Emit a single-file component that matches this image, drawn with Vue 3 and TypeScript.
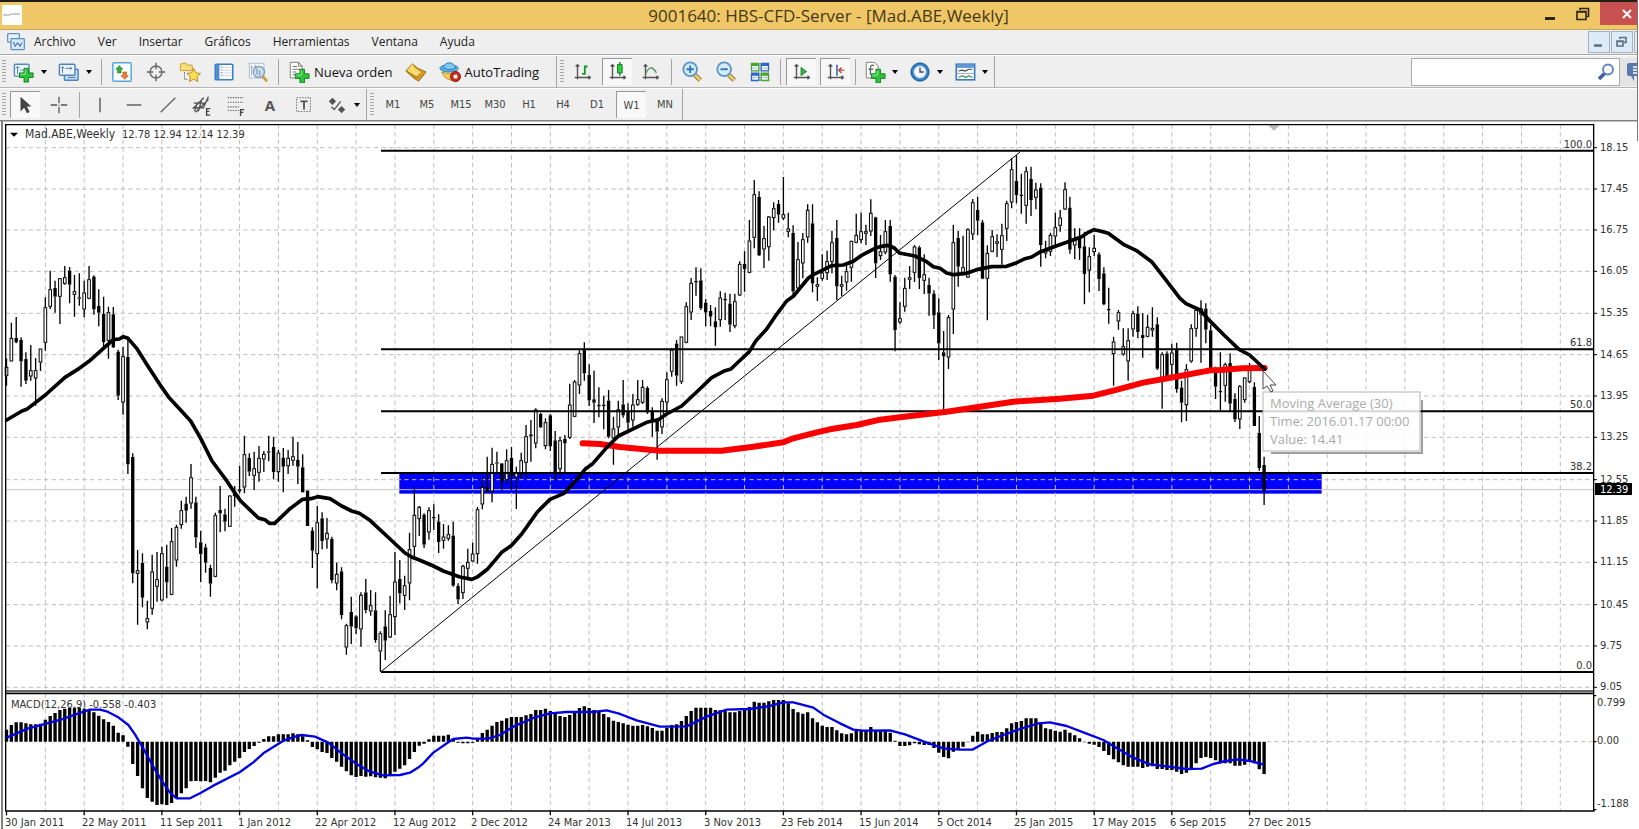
<script setup lang="ts">
interface Tool {
  id: string
  label: string
  icon?: string
  text?: string
  caret?: boolean
  active?: boolean
  kind?: 'sep' | 'grip' | 'end'
}

const green = '<path d="M13 9h5v5h5v5h-5v5h-5v-5H8v-5h5z" fill="#2fc23a" stroke="#14801c"/><path d="M14.500 10.500v5h-5" fill="none" stroke="#9cf09f"/>'
const axes = '<path d="M6 4v16M3 18h17M4 6l2-2 2 2M18 16l2 2-2 2" fill="none" stroke="#555" stroke-width="1.5"/>'
const lens = '<path d="M15 15l6 6" stroke="#8a6a1c" stroke-width="5"/><path d="M15 15l6 6" stroke="#e8cf70" stroke-width="3"/><circle cx="10" cy="9" r="7.500" fill="#d3ecfa" stroke="#5e93c8" stroke-width="2"/>'

const icons: Record<string, string> = {
  newchart: '<rect x="1.500" y="3.500" width="16" height="13" rx="1" fill="#eef6fc" stroke="#5488b8" stroke-width="1.500"/><path d="M5 6v8M3 8l2-2 2 2M8 10h6" fill="none" stroke="#4679a8"/><g transform="translate(-1,-1)">' + green + '</g>',
  profiles: '<rect x="7" y="9" width="15" height="12" rx="1" fill="#bfdcf1" stroke="#4d83b8" stroke-width="1.500"/><rect x="1.500" y="3.500" width="17" height="12" rx="1" fill="#eef6fc" stroke="#4d83b8" stroke-width="1.500"/><path d="M5 6v7M3.500 8L5 6l1.500 2M8 8h7M13 6.500L15 8l-2 1.500M11 18h8" fill="none" stroke="#4679a8"/>',
  market: '<rect x="2" y="2" width="20" height="20" rx="1" fill="#fafdff" stroke="#58a5d6" stroke-width="1.600"/><path d="M9 5l4 4h-2v4H7V9H5z" fill="#38a844" stroke="#1f7a2c" stroke-width=".6"/><path d="M15 20l4-4h-2v-4h-4v4h-2z" fill="#ef7a3b" stroke="#b34a18" stroke-width=".6"/>',
  target: '<circle cx="12" cy="12" r="6.500" fill="none" stroke="#6a6a6a" stroke-width="1.600"/><path d="M12 2v7M12 15v7M2 12h7M15 12h7" stroke="#6a6a6a" stroke-width="1.600"/>',
  folder: '<path d="M1.500 4.500l1-2h5l1 2h6v6h-13z" fill="#f8df7c" stroke="#c59a2c"/><path d="M6 12v8h4" fill="none" stroke="#666" stroke-dasharray="2 1"/><path d="M16 8l2.300 5 5.200.5-4 3.600 1.200 5.400-4.700-2.800-4.700 2.800 1.200-5.400-4-3.600 5.200-.5z" fill="#ffdf55" stroke="#b68418"/>',
  panel: '<rect x="2.500" y="3.500" width="19" height="17" rx="1" fill="#fff" stroke="#3a7cc0" stroke-width="1.800"/><rect x="3" y="4" width="4" height="16" fill="#4c8ed2"/><path d="M9 7h11M9 10h11M9 13h11M9 16h11" stroke="#c4d3e3"/><path d="M9 6v12" stroke="#555" stroke-dasharray="1 2"/>',
  tester: '<rect x="2.500" y="2.500" width="16" height="16" fill="#f5f9fc" stroke="#a9bccb"/><path d="M5 5v11M9 4v8M4 7h3M8 6h3" stroke="#8aa2b6"/><path d="M17 17l5 5" stroke="#c9a23a" stroke-width="3"/><circle cx="13" cy="12" r="6" fill="#c9e0f1" fill-opacity=".85" stroke="#7f9db5" stroke-width="1.500"/><path d="M11 8v7M14 10v6" stroke="#5c7d99"/>',
  order: '<path d="M2.500 1.500h9l4 4v13h-13z" fill="#fff" stroke="#777"/><path d="M11.500 1.500v4h4M5 6h5M5 9h8M5 12h4M5 15h3" fill="none" stroke="#666"/>' + green,
  editor: '<path d="M8 3l6 5 9 4-8 10-5-3-9-8z" fill="#d89a22" stroke="#99660e"/><path d="M8 3l3 5 8 5-6 4-11-6z" fill="#f9dd70"/><path d="M2 11l10 7 7-6" fill="none" stroke="#a3700f"/>',
  robot: '<path d="M3 12c2 6 8 10 14 9l3-9c-5 2-12 2-17 0z" fill="#f3cf55" stroke="#b3862a"/><ellipse cx="11" cy="8" rx="10" ry="4" fill="#5fb1e0" stroke="#2d77ab"/><path d="M5 8c0-8 12-8 13 0q-6 3-13 0z" fill="#7fc8ee" stroke="#2d77ab"/><circle cx="18" cy="17" r="5.500" fill="#c82a1e" stroke="#8c1810"/><rect x="16" y="15" width="4" height="4" fill="#fff"/>',
  bars: axes + '<path d="M14 5v10M14 6h3M11 14h3" fill="none" stroke="#159a2a" stroke-width="2"/>',
  candles: axes + '<path d="M14 1v15" stroke="#0f7a1d" stroke-width="1.500"/><rect x="11.500" y="4" width="5" height="9" fill="#2fd044" stroke="#0f7a1d"/>',
  line: axes + '<path d="M6 14c4-8 7-9 12-1" fill="none" stroke="#4f9a58" stroke-width="1.600"/>',
  zoomin: lens + '<path d="M6 9h8M10 5v8" stroke="#2e75b8" stroke-width="2"/>',
  zoomout: lens + '<path d="M6 9h8" stroke="#2e75b8" stroke-width="2"/>',
  tiles: '<path d="M2 2h9.500v9.500H2zM12.500 12.500H22V22h-9.500z" fill="#49a32c"/><path d="M12.500 2H22v9.500h-9.500zM2 12.500h9.500V22H2z" fill="#2f66c0"/><path d="M3.500 5.500h6.500V10H3.500zM14 5.500h6.500V10H14zM3.500 16h6.500v4.500H3.500zM14 16h6.500v4.500H14z" fill="#eef4fb"/><path d="M4 8h5M15 8h5M4 18h5M15 18h5" stroke="#9fb7cc"/>',
  scroll: axes + '<path d="M11 7v9l6-4.500z" fill="#35b545" stroke="#15802a"/>',
  shift: axes + '<path d="M13 4v12" stroke="#3c6fb0" stroke-width="1.800"/><path d="M21 10h-6M18 7l-3 3 3 3" fill="none" stroke="#c04428" stroke-width="1.500"/>',
  indicator: '<path d="M2.500 1.500h9l4 4v13h-13z" fill="#fff" stroke="#777"/><path d="M11 5c-3-1-4 0-4 3v7M5 9h5" fill="none" stroke="#666" stroke-width="1.500"/>' + green,
  clock: '<circle cx="12" cy="12" r="10" fill="#2f7cc4" stroke="#1c5790"/><circle cx="12" cy="12" r="6.800" fill="#f3f8fc" stroke="#8fb6d8"/><path d="M12 7v5h4" fill="none" stroke="#444" stroke-width="1.500"/>',
  template: '<rect x="2.500" y="3.500" width="20" height="17" fill="#fff" stroke="#3f7ab8" stroke-width="1.800"/><path d="M3 5.500h19" stroke="#5f9ad6" stroke-width="4"/><path d="M5 11l4-1 3 1 4-2h4" fill="none" stroke="#444" stroke-width="1.200"/><path d="M3 13.500h19" stroke="#7fa9d0"/><path d="M5 18l4-2 4 2 3-2 4 2" fill="none" stroke="#3d8f58" stroke-width="1.300"/>',
  cursor: '<path d="M6 3v16l4-4 3 6 3-1.500-3-6h5z" fill="#444"/>',
  cross: '<path d="M12 3v7M12 14v7M3 12h7M14 12h7" stroke="#555" stroke-width="1.400"/><path d="M11.500 12h1" stroke="#555"/>',
  vline: '<path d="M12 4v16" stroke="#555" stroke-width="1.500"/>',
  hline: '<path d="M4 12h16" stroke="#555" stroke-width="1.500"/>',
  trend: '<path d="M4 20L20 4" stroke="#666" stroke-width="1.500"/>',
  channel: '<path d="M2 16L14 4M5 20L19 6M3 10h13M2 15h12M8 19l4-14M4 19l3-10M13 16l6-13" stroke="#555" stroke-width="1.500"/><path d="M21 16h-4v7h4M17 19h3" fill="none" stroke="#444" stroke-width="1.500"/>',
  fibo: '<path d="M3 4h17M3 9h17M3 14h12M3 18h12" stroke="#666" stroke-dasharray="1.500 1.200" stroke-width="1.300"/><path d="M21 17h-4v7M17 20h3" fill="none" stroke="#444" stroke-width="1.500"/>',
  label: '<rect x="4" y="4" width="15" height="15" fill="none" stroke="#555" stroke-dasharray="1.500 1.500"/><path d="M8 8h8M12 8v9" stroke="#555" stroke-width="2"/>',
  arrows: '<path d="M7 4l4 4-4 4-4-4zM17 13l4 4-4 4-4-4z" fill="#555"/><path d="M6 14l3 3 7-9" fill="none" stroke="#555" stroke-width="1.500"/>',
  app: '<rect x="2" y="2" width="14" height="10" rx="1" fill="#e9f2fa" stroke="#5b90c4" stroke-width="1.500"/><rect x="6" y="8" width="16" height="13" rx="1" fill="#d7e8f6" stroke="#5b90c4" stroke-width="1.500"/><path d="M9 12l2 5 3-4 3 4 2-4" fill="none" stroke="#3f78b0" stroke-width="1.300"/>',
}

const menu: string[] = ['Archivo', 'Ver', 'Insertar', 'Gráficos', 'Herramientas', 'Ventana', 'Ayuda']

const mainTools: Tool[] = [
  { id: 'newchart', label: 'Nuevo gráfico', icon: 'newchart', caret: true },
  { id: 'profiles', label: 'Perfiles', icon: 'profiles', caret: true },
  { id: 's1', label: '', kind: 'sep' },
  { id: 'market', label: 'Observación del mercado', icon: 'market' },
  { id: 'target', label: 'Ventana de datos', icon: 'target' },
  { id: 'folder', label: 'Navegador', icon: 'folder' },
  { id: 'panel', label: 'Terminal', icon: 'panel' },
  { id: 'tester', label: 'Probador de estrategias', icon: 'tester' },
  { id: 's2', label: '', kind: 'sep' },
  { id: 'order', label: 'Nueva orden', icon: 'order', text: 'Nueva orden' },
  { id: 'editor', label: 'Editor', icon: 'editor' },
  { id: 'auto', label: 'AutoTrading', icon: 'robot', text: 'AutoTrading' },
  { id: 'e1', label: '', kind: 'end' },
  { id: 'g1', label: '', kind: 'grip' },
  { id: 'bars', label: 'Barras', icon: 'bars' },
  { id: 'candles', label: 'Velas', icon: 'candles', active: true },
  { id: 'line', label: 'Línea', icon: 'line' },
  { id: 's3', label: '', kind: 'sep' },
  { id: 'zoomin', label: 'Acercar', icon: 'zoomin' },
  { id: 'zoomout', label: 'Alejar', icon: 'zoomout' },
  { id: 'tiles', label: 'Mosaico', icon: 'tiles' },
  { id: 's4', label: '', kind: 'sep' },
  { id: 'scroll', label: 'Desplazamiento automático', icon: 'scroll', active: true },
  { id: 'shift', label: 'Desplazamiento del gráfico', icon: 'shift', active: true },
  { id: 's5', label: '', kind: 'sep' },
  { id: 'indicator', label: 'Indicadores', icon: 'indicator', caret: true },
  { id: 'clock', label: 'Períodos', icon: 'clock', caret: true },
  { id: 'template', label: 'Plantillas', icon: 'template', caret: true },
  { id: 'e2', label: '', kind: 'end' },
]

const drawTools: Tool[] = [
  { id: 'cursor', label: 'Cursor', icon: 'cursor', active: true },
  { id: 'cross', label: 'Retículo', icon: 'cross' },
  { id: 's1', label: '', kind: 'sep' },
  { id: 'vline', label: 'Línea vertical', icon: 'vline' },
  { id: 'hline', label: 'Línea horizontal', icon: 'hline' },
  { id: 'trend', label: 'Línea de tendencia', icon: 'trend' },
  { id: 'channel', label: 'Canal equidistante', icon: 'channel' },
  { id: 'fibo', label: 'Fibonacci', icon: 'fibo' },
  { id: 'text', label: 'Texto', text: 'A' },
  { id: 'label', label: 'Etiqueta', icon: 'label' },
  { id: 'arrows', label: 'Flechas', icon: 'arrows', caret: true },
  { id: 'e1', label: '', kind: 'end' },
]
const frames: string[] = ['M1', 'M5', 'M15', 'M30', 'H1', 'H4', 'D1', 'W1', 'MN']

// Chart geometry is held in thirds of a unit of the drawing's view box.
const LEFT = 17
const RIGHT = 4781
const TOP = 14
const SPLIT = 1711
const SUBTOP = 1721
const BOTTOM = 2072
const ZERO = 1865
const barX = (i: number): number => 19.5 + 14.567 * i

// One candle per week: high, body top, body bottom, low; "f" marks a falling week.
const candleData = `715 741 767 797 h|608 654 724 724 h|591 654 667 670 f|652 660 724 800 f|697 717 782 792 f|675 751 769 782 h|714 751 775 857 h|686 686 727 753 h
532 562 668 692 h|452 508 560 567 h|482 504 530 578 f|474 475 530 612 h|438 472 491 494 h|441 452 494 550 f|465 514 524 590 h|460 532 536 557 f
482 518 568 592 h|438 478 536 538 h|466 470 568 584 f|508 558 578 619 f|530 582 666 680 f|560 577 662 716 h|561 583 682 684 f|689 695 827 840 f
680 709 847 884 h|655 711 1033 1062 f|1000 1011 1360 1390 f|1290 1351 1361 1514 h|1300 1329 1433 1462 f|1442 1495 1507 1528 h|1304 1355 1466 1484 h|1296 1378 1400 1445 h
1280 1300 1441 1444 h|1274 1340 1387 1435 f|1224 1264 1424 1426 h|1214 1221 1321 1340 h|1142 1171 1215 1226 h|1130 1151 1172 1208 f|1032 1072 1150 1166 h|1130 1147 1252 1284 f
1232 1267 1302 1387 f|1271 1282 1328 1358 f|1334 1344 1391 1430 f|1178 1186 1370 1372 h|1098 1170 1180 1237 f|1166 1183 1205 1234 f|1126 1127 1220 1220 h|1098 1116 1128 1160 h
1038 1108 1114 1120 f|947 1003 1102 1120 h|1000 1014 1055 1068 f|995 1045 1067 1110 h|978 1014 1058 1085 h|993 1002 1018 1056 h|947 994 998 1024 f|950 981 1056 1078 f
990 998 1056 1085 h|984 1013 1040 1117 f|990 1014 1038 1062 h|950 1009 1022 1037 h|966 1020 1040 1092 f|1003 1042 1117 1117 f|1111 1112 1218 1218 f|1222 1232 1292 1344 f
1158 1207 1302 1405 h|1177 1195 1263 1288 f|1194 1239 1258 1286 h|1250 1257 1380 1390 f|1328 1362 1390 1411 h|1342 1354 1485 1498 f|1511 1516 1582 1604 h|1430 1476 1520 1572 f
1486 1489 1525 1542 f|1417 1425 1528 1580 h|1377 1417 1470 1480 f|1410 1456 1474 1487 h|1417 1471 1560 1568 f|1534 1540 1594 1655 h|1471 1519 1562 1620 f|1427 1483 1552 1554 h
1296 1385 1491 1545 h|1320 1377 1420 1450 f|1367 1396 1427 1470 h|1238 1288 1390 1441 h|1105 1185 1280 1310 h|1158 1161 1197 1248 h|1180 1184 1274 1284 f|1162 1171 1237 1259 h
1153 1191 1195 1230 f|1183 1205 1266 1299 f|1212 1250 1262 1286 h|1216 1243 1256 1262 h|1205 1247 1397 1400 f|1390 1398 1438 1452 f|1334 1338 1419 1437 h|1286 1326 1346 1375 h
1268 1301 1324 1326 h|1161 1168 1302 1331 h|1070 1101 1153 1168 h|1010 1102 1116 1118 f|983 1032 1114 1147 h|995 1027 1031 1060 f|1030 1030 1085 1111 f|988 1021 1080 1090 h
981 1014 1070 1110 f|1040 1058 1072 1167 h|998 1021 1065 1075 h|915 949 1028 1075 h|900 943 949 1025 f|865 869 970 985 h|878 882 922 924 f|895 907 978 988 h
882 886 979 993 f|933 961 1062 1082 f|950 961 1047 1072 h|945 957 970 1062 f|791 854 953 957 h|780 785 890 892 h|691 700 796 822 h|667 690 760 782 f
733 765 841 858 f|752 838 848 909 f|802 855 859 892 f|827 854 858 928 f|810 842 950 955 f|890 926 955 1034 h|842 868 922 955 h|780 853 886 893 f
850 875 908 930 f|822 854 901 920 h|780 838 854 858 h|780 801 848 852 h|799 804 877 882 f|862 873 905 950 f|894 900 935 1019 f|835 843 922 942 h
757 778 847 880 h|684 690 755 770 h|660 671 767 797 f|650 650 785 792 h|547 559 668 670 h|474 489 577 600 h|442 483 487 527 f|445 481 564 570 f
537 548 577 619 f|555 573 590 619 f|562 604 622 677 f|514 533 600 620 h|518 537 541 600 f|521 551 614 636 f|521 544 618 625 h|424 432 526 528 h
394 432 447 515 f|300 362 458 460 h|180 223 353 385 h|214 231 406 408 f|318 355 388 444 h|288 290 381 422 h|247 265 294 331 h|240 252 284 308 f
171 283 295 300 h|278 326 335 352 h|316 339 514 524 f|366 418 505 515 h|339 358 430 475 h|253 270 352 368 h|253 310 490 517 f|472 493 500 543 h
403 458 476 482 h|392 424 459 480 h|332 367 425 460 h|300 354 499 540 f|467 493 500 528 h|436 454 487 512 h|362 363 443 485 h|281 345 368 370 h
278 334 360 370 h|314 334 341 375 h|238 279 334 348 h|290 292 430 474 f|345 394 408 420 h|300 334 397 403 h|300 318 463 485 f|465 470 630 694 f
547 595 607 612 h|473 504 560 575 h|438 472 479 507 h|375 380 458 486 h|377 382 474 507 f|403 463 482 522 h|473 495 521 587 f|511 521 586 627 f
535 577 670 721 f|633 697 709 870 f|585 592 712 747 h|314 367 568 642 h|333 354 440 500 f|347 442 458 465 h|325 328 472 474 h|237 247 343 360 h
231 270 302 345 f|300 307 476 478 f|376 399 476 601 h|330 349 395 397 h|343 364 371 411 h|311 346 389 434 h|242 250 326 363 h|115 148 247 265 h
106 183 225 250 f|161 224 228 281 f|140 154 257 311 h|140 177 240 288 f|188 209 233 268 h|190 203 375 440 f|362 393 400 415 h|338 345 395 408 h
278 322 349 375 h|270 293 317 335 h|187 208 268 270 h|230 263 389 401 f|325 360 376 418 h|325 350 385 420 f|335 379 462 553 f|382 409 451 517 h
345 384 396 408 h|397 403 477 513 f|442 460 553 556 f|503 567 571 611 f|650 665 702 797 h|570 577 604 629 h|625 679 703 707 h|625 661 724 782 h
573 580 628 650 h|559 581 636 655 f|580 645 654 713 f|584 621 650 652 h|562 624 631 650 h|592 613 746 750 f|697 703 775 866 h|694 700 775 778 f
671 698 734 770 h|668 690 807 818 f|782 803 848 907 f|733 748 855 903 h|613 625 724 728 h|565 570 626 650 h|541 565 583 728 h|550 566 629 670 f
615 631 745 747 f|740 758 800 837 f|697 813 817 870 f|728 733 797 845 h|700 729 851 872 f|820 837 898 906 f|795 799 898 927 h|772 773 840 848 h
729 750 786 790 h|787 801 918 918 f|888 939 1044 1052 f|1010 1035 1112 1155 f`

const candles = candleData.split(/[|\n]/).map((row, i) => {
  const [high, top, bottom, low, kind] = row.trim().split(' ')
  return { x: barX(i), high: +high, top: +top, bottom: +bottom, low: +low, falling: kind === 'f' }
})
const wickPath = candles.map(c => `M${c.x} ${c.high}V${c.top}M${c.x} ${c.bottom}V${c.low}`).join('')
const bodies = candles.map(c => ({ ...c, h: Math.max(4, c.bottom - c.top) }))

// Histogram ends, one per week, measured from the top of the price scale.
const macdData = `779 765 757 757 760 763 763 761 749 738 729 720 716 714 713 714 716 721 727 737 748 756 767 788 796 830 882 918 955 984 995 1005 1003 1005 999 985 970 955 934 933 934 933 937 923 908 902 886 875 864 846 837 828 818 807 799 799 793 793 793 790 793 799 811 831 838 846 849 864 875 890 904 916 921 918 920 919 922 923 925 916 905 896 886 867 846 827 821 808 797 797 797 794 806 818 820 820 818 807 789 779 767 756 752 745 741 741 741 736 732 720 720 716 723 727 738 741 735 729 714 709 714 720 726 732 742 752 756 760 764 767 767 765 769 774 782 782 773 765 763 753 738 723 713 713 713 713 720 721 723 727 727 723 719 711 695 698 698 694 690 690 690 700 717 727 731 727 745 757 767 771 771 781 790 793 790 782 780 780 771 780 783 783 788 812 828 828 826 820 823 825 825 834 848 861 865 845 840 830 817 797 785 793 793 789 786 786 775 760 756 753 745 745 745 758 775 778 782 785 779 788 796 805 817 821 824 831 843 855 868 877 886 890 890 890 894 890 889 897 897 900 900 905 912 908 897 880 864 861 864 871 880 880 880 887 887 884 873 880 898 912`
const macdPath = macdData.split(' ').map((v, i) => `M${barX(i)} ${ZERO}V${+v + 1050}`).join('')

const ma30 = '20,900 66,873 80,868 136,825 195,772 238,745 267,724 297,697 340,659 358,657 370,650 384,655 410,685 443,737 486,803 505,830 572,903 602,955 636,1023 680,1082 700,1112 722,1143 775,1194 795,1199 808,1210 824,1210 870,1166 908,1138 933,1136 953,1130 990,1136 1025,1158 1055,1173 1078,1180 1110,1201 1170,1257 1215,1299 1235,1311 1258,1320 1300,1338 1330,1353 1380,1371 1415,1378 1432,1371 1462,1348 1505,1297 1535,1276 1565,1242 1590,1207 1612,1176 1650,1138 1692,1120 1725,1085 1757,1046 1778,1031 1820,983 1855,948 1940,907 1975,899 2000,882 2045,858 2090,816 2135,773 2175,752 2193,747 2218,723 2248,695 2268,662 2300,627 2330,583 2360,543 2380,529 2425,474 2440,464 2465,452 2495,437 2530,435 2560,424 2583,407 2625,385 2645,379 2662,376 2682,383 2698,399 2745,408 2780,425 2800,440 2820,445 2840,459 2860,464 2900,460 2930,449 2975,440 3020,439 3050,428 3075,416 3095,411 3122,395 3160,381 3200,367 3245,350 3265,337 3282,329 3300,333 3325,340 3370,373 3410,392 3455,425 3490,470 3540,535 3558,551 3600,570 3625,598 3672,645 3717,688 3749,705 3794,747'
const ma200 = '1748,970 1800,972 1860,981 1980,992 2165,992 2260,980 2350,967 2380,955 2450,937 2490,928 2570,915 2640,899 2700,892 2840,875 2940,860 3040,845 3180,836 3280,827 3340,812 3430,788 3540,768 3630,751 3660,750 3727,745 3794,744'
const signal = '20,803 85,775 130,763 180,750 253,724 270,719 300,719 320,724 355,742 385,765 405,793 430,836 460,890 487,935 510,968 530,985 570,985 600,970 640,947 720,906 760,877 790,850 850,812 885,800 905,795 945,800 985,818 1025,850 1070,882 1110,905 1150,916 1200,915 1230,908 1258,890 1270,880 1300,848 1345,817 1360,807 1400,803 1420,806 1465,806 1500,795 1540,770 1600,744 1650,730 1700,726 1780,726 1820,721 1860,732 1910,751 1980,770 2060,769 2120,740 2180,719 2250,717 2310,708 2350,697 2380,697 2440,713 2470,734 2520,760 2560,779 2590,782 2670,781 2715,793 2770,814 2830,835 2880,839 2917,839 2960,815 3010,795 3060,777 3115,760 3150,757 3200,768 3260,791 3310,810 3350,834 3400,863 3450,883 3500,889 3560,897 3605,896 3640,882 3677,873 3715,868 3749,873 3792,884'

const prices = [83, 207, 330, 454, 580, 704, 828, 952, 1079, 1203, 1327, 1454, 1578, 1702].map((y, i) => ({
  y,
  text: (18.15 - 0.7 * i).toFixed(2),
}))
const columns = Array.from({ length: 40 }, (_, i) => barX(8 * (i + 1))).filter(x => x < RIGHT)
const gridPath =
  prices.map(p => `M${LEFT} ${p.y}H${RIGHT}`).join('') +
  columns.map(x => `M${x} ${TOP}V${SPLIT}M${x} ${SUBTOP}V${BOTTOM}`).join('') +
  `M3800 ${ZERO}H${RIGHT}`

const fibs = [
  { y: 92, text: '100.0' },
  { y: 688, text: '61.8' },
  { y: 874, text: '50.0' },
  { y: 1059, text: '38.2' },
  { y: 1656, text: '0.0' },
]
const dates = [
  '30 Jan 2011', '22 May 2011', '11 Sep 2011', '1 Jan 2012', '22 Apr 2012', '12 Aug 2012', '2 Dec 2012', '24 Mar 2013', '14 Jul 2013',
  '3 Nov 2013', '23 Feb 2014', '15 Jun 2014', '5 Oct 2014', '25 Jan 2015', '17 May 2015', '6 Sep 2015', '27 Dec 2015',
].map((text, i) => ({ text, x: barX(16 * i) }))
</script>

<template>
  <div class="window">
    <header class="chrome">
      <div class="titlebar">
        <div class="logo"><svg width="20" height="20" viewBox="0 0 20 20" aria-hidden="true"><path d="M1 10h6l3-1h8" fill="none" stroke="#999" /></svg></div>
        <h1>9001640: HBS-CFD-Server - [Mad.ABE,Weekly]</h1>
        <div class="winbtns">
          <button type="button" aria-label="Minimizar"><svg width="12" height="14" viewBox="0 0 12 14"><path d="M1 11.500h10" stroke="#2c2410" stroke-width="3" /></svg></button>
          <button type="button" aria-label="Restaurar"><svg width="14" height="14" viewBox="0 0 14 14"><path d="M1 4.500h9v8H1zM1 5h9M4 3V1.500h8.500v8H11" fill="none" stroke="#2c2410" stroke-width="1.600" /></svg></button>
          <button type="button" class="close" aria-label="Cerrar"><svg width="12" height="12" viewBox="0 0 12 12"><path d="M2 2l8 8M10 2l-8 8" stroke="#fff" stroke-width="2" /></svg></button>
        </div>
      </div>

      <div class="menubar">
        <svg class="appicon" width="20" height="20" viewBox="0 0 24 24" aria-hidden="true" v-html="icons.app"></svg>
        <nav>
          <button v-for="m in menu" :key="m" type="button">{{ m }}</button>
        </nav>
        <div class="mdi">
          <button type="button" aria-label="Minimizar gráfico"><svg width="20" height="20" viewBox="0 0 20 20"><path d="M5 13.500h8" stroke="#5d6f80" stroke-width="2.500" /></svg></button>
          <button type="button" aria-label="Restaurar gráfico"><svg width="20" height="20" viewBox="0 0 20 20"><path d="M5 9h6v5H5zM5 9.500h6M8 7V5.500h6v5h-2" fill="none" stroke="#5d6f80" stroke-width="1.600" /></svg></button>
          <button type="button" class="cut" aria-label="Cerrar gráfico"></button>
        </div>
      </div>

      <div class="toolbar first">
        <span class="grip"></span>
        <template v-for="t in mainTools" :key="t.id">
          <span v-if="t.kind" :class="t.kind"></span>
          <button v-else type="button" class="tool" :class="{ active: t.active, drop: t.caret, worded: t.text }" :aria-label="t.label">
            <svg width="22" height="22" viewBox="0 0 24 24" aria-hidden="true" v-html="icons[t.icon ?? '']"></svg>
            <span v-if="t.text">{{ t.text }}</span>
            <i v-if="t.caret" class="caret"></i>
          </button>
        </template>
        <div class="search">
          <input type="text" aria-label="Buscar" />
          <button type="button" aria-label="Buscar"><svg width="18" height="18" viewBox="0 0 18 18"><path d="M2 16l6-6" stroke="#3f5fa8" stroke-width="3.500" /><circle cx="11" cy="6.500" r="5" fill="#f4f9ff" stroke="#5c80bd" stroke-width="1.800" /></svg></button>
        </div>
        <button type="button" class="chat" aria-label="Chat"><svg width="11" height="20" viewBox="0 0 11 20"><path d="M11 1H3Q1 1 1 3v9q0 2 2 2h2l3 5v-5h3z" fill="#5b78ae" /><path d="M7 5h4M7 8h4M7 11h4" stroke="#fff" stroke-width="1.500" /></svg></button>
      </div>

      <div class="toolbar">
        <span class="grip"></span>
        <template v-for="t in drawTools" :key="t.id">
          <span v-if="t.kind" :class="t.kind"></span>
          <button v-else type="button" class="tool" :class="{ active: t.active, drop: t.caret }" :aria-label="t.label">
            <svg v-if="t.icon" width="22" height="22" viewBox="0 0 24 24" aria-hidden="true" v-html="icons[t.icon]"></svg>
            <b v-else>{{ t.text }}</b>
            <i v-if="t.caret" class="caret"></i>
          </button>
        </template>
        <span class="grip"></span>
        <button v-for="f in frames" :key="f" type="button" class="tool frame" :class="{ active: f === 'W1' }">{{ f }}</button>
        <span class="end"></span>
      </div>
    </header>

    <main class="chart">
      <svg viewBox="0 0 1639 709" role="img" aria-label="Mad.ABE,Weekly">
        <path d="M0 0.500H1637" stroke="#808080" stroke-width="2" />
        <path d="M2 0V709" stroke="#808080" stroke-width="2" />
        <path d="M1637.500 0V21" stroke="#777" />
        <g transform="scale(.33333)">
          <rect x="1198" y="1060" width="2767" height="61" fill="#0000ff" />
          <path :d="gridPath" fill="none" stroke="#bdbdbd" stroke-width="3" stroke-dasharray="13 10" />
          <path d="M17 1109H4781" stroke="#c4c4c4" stroke-width="3" />
          <path :d="wickPath" stroke="#000" stroke-width="4" />
          <template v-for="c in bodies" :key="c.x">
            <rect v-if="c.falling" :x="c.x - 5" :y="c.top" width="10" :height="c.h" fill="#000" />
            <rect v-else :x="c.x - 4" :y="c.top + 1" width="8" :height="c.h - 2" fill="#fff" stroke="#000" stroke-width="3" />
          </template>
          <path d="M1143 1655L3060 96" stroke="#000" stroke-width="3" />
          <path v-for="f in fibs" :key="f.y" :d="`M1143 ${f.y}H4781`" stroke="#000" stroke-width="6" />
          <polyline :points="ma200" fill="none" stroke="#fb0000" stroke-width="18" stroke-linecap="round" stroke-linejoin="round" />
          <polyline :points="ma30" fill="none" stroke="#000" stroke-width="11" stroke-linecap="round" stroke-linejoin="round" />
          <path :d="macdPath" stroke="#000" stroke-width="10" />
          <polyline :points="signal" transform="translate(0 1050)" fill="none" stroke="#0000e0" stroke-width="7" stroke-linejoin="round" />
          <path d="M3805 16h34l-17 17z" fill="#b8b8b8" />
          <path d="M30 38h24l-12 12z" fill="#000" />
          <path d="M17 1714H4781" stroke="#666" stroke-width="8" />
          <path d="M17 2074V14H4781V2072M17 1721H4781M17 2073H4784" fill="none" stroke="#000" stroke-width="4" />
          <path v-for="p in prices" :key="p.y" :d="`M4781 ${p.y}h10`" stroke="#000" stroke-width="3" />
          <path d="M4781 1727h8M4781 1865h8M4781 2069h8" stroke="#000" stroke-width="4" />
          <path v-for="d in dates" :key="d.x" :d="`M${d.x} 2072v14`" stroke="#000" stroke-width="4" />
        </g>

        <g class="labels">
          <text class="symbol" x="25" y="18">Mad.ABE,Weekly</text>
          <text x="122" y="18">12.78 12.94 12.14 12.39</text>
          <text x="11" y="588">MACD(12,26,9) -0.558 -0.403</text>
          <text v-for="f in fibs" :key="f.text" x="1592" :y="Math.round(f.y / 3) - 3" text-anchor="end">{{ f.text }}</text>
          <text v-for="p in prices" :key="p.text" x="1600" :y="Math.round(p.y / 3) + 3">{{ p.text }}</text>
          <text x="1597" y="586">0.799</text>
          <text x="1597" y="624">0.00</text>
          <text x="1597" y="687">-1.188</text>
          <text v-for="d in dates" :key="d.text" :x="Math.round(d.x / 3) - 2" y="706">{{ d.text }}</text>
          <rect x="1595" y="363" width="37" height="12" fill="#000" />
          <text class="tag" x="1600" y="373">12.39</text>
        </g>

        <path d="M1271 332H1421V280h2V334H1271z" fill="#000" fill-opacity=".38" />
        <rect x="1263" y="272" width="157" height="59" fill="#fff" fill-opacity=".84" stroke="#b4b4b4" />
        <g class="tip">
          <text x="1270" y="288">Moving Average (30)</text>
          <text x="1270" y="306">Time: 2016.01.17 00:00</text>
          <text x="1270" y="324">Value: 14.41</text>
        </g>
        <path d="M1263 251v18l4-3 4 6 2-1-3-6h6z" fill="#fff" stroke="#444" />
      </svg>
    </main>
  </div>
</template>

<style>
body {
  margin: 0;
  background: #fff;
}
</style>

<style scoped>
.window {
  color: #222;
  font-family: 'Open Sans', 'Noto Sans', sans-serif;
}
.chrome {
  margin-right: 1px;
  border-right: 1px solid #777;
  background: #efefef;
}
button {
  margin: 0;
  padding: 0;
  border: 0;
  background: none;
  color: inherit;
  font: inherit;
}
svg {
  display: block;
}
.titlebar {
  display: grid;
  grid-template-columns: 1fr auto 1fr;
  align-items: start;
  height: 27px;
  border-top: 2px solid #221d14;
  border-bottom: 1px solid #c3a663;
  background: #f0c767;
}
.logo {
  width: 20px;
  margin: 3px 2px;
  background: #fff;
}
h1 {
  margin: 0;
  padding-left: 20px;
  color: #453817;
  font-size: 17px;
  font-weight: 400;
  line-height: 27px;
}
.winbtns {
  display: flex;
  justify-content: flex-end;
  gap: 2px;
  height: 23px;
}
.winbtns button {
  display: grid;
  width: 31px;
  place-items: center;
}
.winbtns .close {
  width: 37px;
  padding-left: 16px;
  background: #c75050;
}
.menubar {
  display: flex;
  align-items: center;
  height: 24px;
  border-bottom: 1px solid #a8a8a8;
  font-size: 12px;
}
.appicon {
  margin: 0 8px 0 6px;
}
nav {
  display: flex;
  gap: 22px;
  padding-bottom: 2px;
}
.mdi {
  display: flex;
  gap: 1px;
  margin-left: auto;
}
.mdi button {
  width: 22px;
  border: 1px solid #a5b2be;
  background: #dcebf7;
}
.mdi .cut {
  width: 3px;
  border-right: 0;
}
.toolbar {
  display: flex;
  align-items: center;
  gap: 4px;
  height: 31px;
  border-top: 1px solid #fff;
  font-size: 12px;
}
.first {
  border-bottom: 1px solid #b5b5b5;
}
.grip {
  flex: none;
  width: 4px;
  height: 24px;
  margin-left: 2px;
  background: repeating-linear-gradient(#a5a5a5 0 1px, #efefef 1px 3px);
}
.sep,
.end {
  flex: none;
  width: 1px;
  height: 26px;
  margin: 0 1px;
  background: #a5a5a5;
}
.end {
  height: 31px;
  margin: 0 -3px 0 -2px;
}
.worded + .end {
  margin-left: 9px;
}
.tool {
  display: flex;
  flex: none;
  align-items: center;
  justify-content: center;
  width: 30px;
  height: 27px;
}
.tool.drop {
  justify-content: space-between;
  width: 41px;
  padding: 0 4px 0 3px;
}
.tool.worded {
  gap: 4px;
  width: auto;
  padding: 0 4px;
  color: #111;
  font-size: 13px;
}
.tool.active {
  border-top: 1px solid #999;
  border-left: 1px solid #999;
  background: #f8f8f8;
}
.tool b {
  color: #555;
  font-size: 15px;
}
.frame {
  color: #444;
  font-family: 'DejaVu Sans Condensed', 'DejaVu Sans', sans-serif;
  font-size: 11px;
}
.caret {
  border: 3px solid transparent;
  border-top: 4px solid #000;
  border-bottom: 0;
}
.search {
  display: flex;
  align-items: center;
  width: 209px;
  height: 28px;
  margin-left: auto;
  border: 1px solid #aaa;
  box-sizing: border-box;
  background: #fff;
}
.search input {
  flex: 1;
  min-width: 0;
  border: 0;
  background: none;
}
.search button {
  margin-right: 4px;
}
.chat {
  display: flex;
  align-items: center;
  justify-content: flex-end;
  width: 17px;
  height: 28px;
  margin-left: -4px;
  background: #e4e4e4;
}
.chart > svg {
  width: 100%;
  height: auto;
}
.labels {
  fill: #333;
  font-family: 'DejaVu Sans Condensed', 'DejaVu Sans', sans-serif;
  font-size: 11px;
}
.symbol {
  font-size: 12px;
}
.tag {
  fill: #fff;
}
.tip {
  fill: #aaa;
  font-size: 13px;
}
</style>
